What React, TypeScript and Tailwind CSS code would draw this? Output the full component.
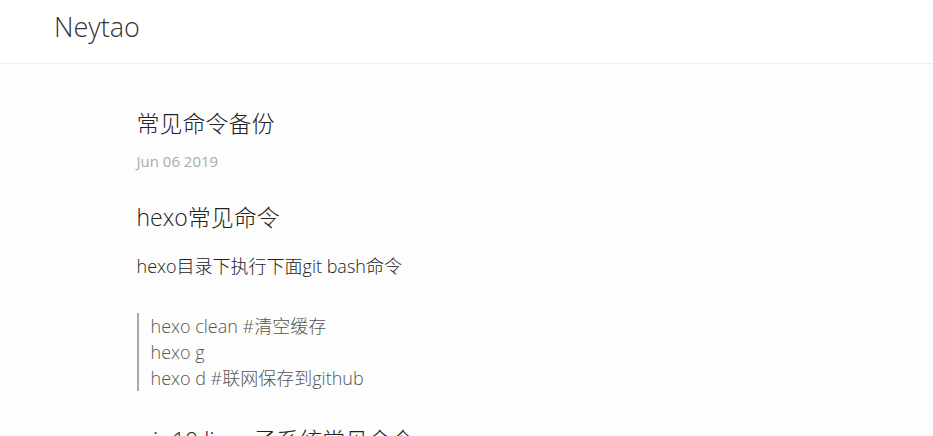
export default function App() {
  const commands = ['hexo clean #清空缓存', 'hexo g', 'hexo d #联网保存到github'];

  return (
    <div
      className="min-h-screen bg-[#fdfdfd] text-[#222] font-light"
      style={{ fontFamily: '"Open Sans", "Noto Sans CJK SC", sans-serif' }}
    >
      <header className="h-[64px] bg-white border-b border-[#eeeeee] pl-[54px] pt-[13px]">
        <a className="block text-[27px] text-[#333] leading-none">Neytao</a>
      </header>

      <main className="w-[660px] mx-auto pt-[43px]">
        <h1 className="text-[23px] leading-[32px]">常见命令备份</h1>
        <div className="mt-[12px] text-[15px] leading-[20px] text-[#aaa] font-normal">Jun 06 2019</div>

        <article className="mt-[31px]">
          <h2 className="text-[23px] leading-[30px]">hexo常见命令</h2>
          <p className="mt-[21px] text-[18px] leading-[26px]">hexo目录下执行下面git bash命令</p>

          <blockquote className="mt-[34px] border-l-2 border-[#aaa] pl-[12px] text-[18px] leading-[26px] text-[#555]">
            {commands.map((c) => (
              <div key={c}>{c}</div>
            ))}
          </blockquote>

          <h2 className="mt-[34px] text-[23px] leading-[30px]">win10 linux子系统常见命令</h2>
        </article>
      </main>
    </div>
  );
}
